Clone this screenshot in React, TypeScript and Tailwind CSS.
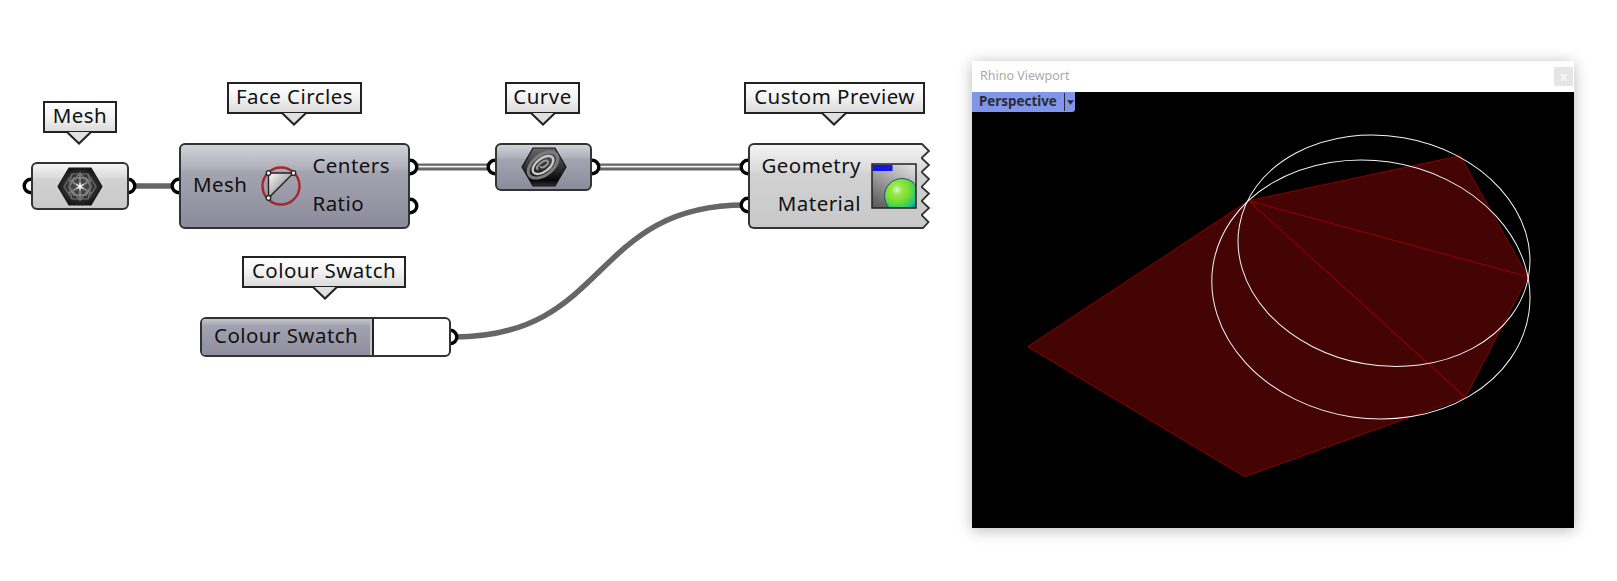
const labelFont = "font-['Noto_Sans',sans-serif] text-[20.5px] leading-[26px] tracking-[0.45px] text-[#111]";
const lightBody = 'bg-[linear-gradient(180deg,#f4f4f4_0%,#d9d9d9_32%,#d2d2d2_34%,#c8c8c8_100%)]';
const darkBody = 'bg-[linear-gradient(180deg,#d2d2d8_0%,#aeaeba_30%,#a4a4b1_32%,#8b8b9c_100%)]';

// --- Canvas pieces ---

function Balloon({ text, className, tipClass }: { text: string; className: string; tipClass: string }) {
  return (
    <div className={`absolute ${className}`}>
      <div className={`h-full flex items-center justify-center pb-[4px] border-2 border-[#222] bg-[linear-gradient(180deg,#ffffff_0%,#f4f4f4_45%,#dcdcdc_100%)] ${labelFont}`}>
        {text}
      </div>
      <svg className={`absolute top-[30px] ${tipClass}`} width="26" height="14" viewBox="0 0 26 14">
        <path d="M1 1 L13 12.500 L25 1" fill="#e0e0e0" stroke="#222" strokeWidth="2" />
      </svg>
    </div>
  );
}

function MeshIcon() {
  return (
    <svg width="46" height="39" viewBox="0 0 46 39">
      <defs>
        <radialGradient id="meshGlow" cx="0.5" cy="0.5" r="0.55">
          <stop offset="0" stopColor="#5a5a5a" />
          <stop offset="0.7" stopColor="#282828" />
          <stop offset="1" stopColor="#0e0e0e" />
        </radialGradient>
      </defs>
      <path d="M12 1 H34 L45 19.500 L34 38 H12 L1 19.500 Z" fill="url(#meshGlow)" stroke="#1c1c1c" strokeWidth="1.200" strokeLinejoin="round" />
      <g stroke="#8e8e8e" strokeWidth="1.500" fill="none">
        <path d="M23 6 V33 M11 12.500 L35 26.500 M35 12.500 L11 26.500" />
        <path d="M15 7 H31 L39 19.500 L31 32 H15 L7 19.500 Z" stroke="#5f5f5f" />
        <path d="M17 11 H29 L34 19.500 L29 28 H17 L12 19.500 Z" />
        <path d="M23 6 L34 19.500 L23 33 L12 19.500 Z" stroke="#747474" />
        <path d="M15 7 L12 19.500 L15 32 M31 7 L34 19.500 L31 32" stroke="#666" />
      </g>
      <path d="M23 16 V23 M19.500 17.500 L26.500 21.500 M26.500 17.500 L19.500 21.500" stroke="#f4f4f4" strokeWidth="1.400" />
      <circle cx="23" cy="19.500" r="1.500" fill="#fff" />
    </svg>
  );
}

function CurveIcon() {
  return (
    <svg width="46" height="40" viewBox="0 0 46 40">
      <defs>
        <linearGradient id="curveHex" x1="0" y1="0" x2="0" y2="1">
          <stop offset="0" stopColor="#6a6a6a" />
          <stop offset="0.55" stopColor="#2c2c2c" />
          <stop offset="0.85" stopColor="#050505" />
          <stop offset="1" stopColor="#333" />
        </linearGradient>
      </defs>
      <path d="M12 1 H34 L45 20 L34 39 H12 L1 20 Z" fill="url(#curveHex)" stroke="#141414" strokeWidth="1.200" strokeLinejoin="round" />
      <g fill="none" strokeLinecap="round" transform="rotate(-38 22 18)">
        <ellipse cx="22" cy="18" rx="17" ry="10" stroke="#7c7c7c" strokeWidth="3" />
        <ellipse cx="22" cy="18" rx="12" ry="6.500" stroke="#c8c8c8" strokeWidth="2.400" />
        <path d="M15 18 C15 14 28 14 28 18 C28 21 19 21 19 18" stroke="#9a9a9a" strokeWidth="2" />
      </g>
    </svg>
  );
}

function FaceCirclesIcon() {
  return (
    <svg width="44" height="44" viewBox="0 0 44 44">
      <defs>
        <linearGradient id="faceTri" x1="0" y1="0" x2="1" y2="1">
          <stop offset="0" stopColor="#fff" />
          <stop offset="0.7" stopColor="#8f8f8f" />
          <stop offset="1" stopColor="#6e6e6e" />
        </linearGradient>
      </defs>
      <path d="M9.500 9 L34.500 9 L9.500 34 Z" fill="url(#faceTri)" stroke="#222" strokeWidth="1.400" />
      <circle cx="22" cy="22" r="18.500" fill="none" stroke="#a5282c" strokeWidth="2.400" />
      <circle cx="9.500" cy="9" r="2.300" fill="#eee" stroke="#222" strokeWidth="1.200" />
      <circle cx="34.500" cy="9" r="2.300" fill="#eee" stroke="#222" strokeWidth="1.200" />
      <circle cx="9.500" cy="34" r="2.300" fill="#eee" stroke="#222" strokeWidth="1.200" />
    </svg>
  );
}

function PreviewIcon() {
  return (
    <svg width="46" height="46" viewBox="0 0 46 46">
      <defs>
        <linearGradient id="previewBack" x1="0.2" y1="1" x2="0.8" y2="0">
          <stop offset="0" stopColor="#5e5e5e" />
          <stop offset="1" stopColor="#dcdcdc" />
        </linearGradient>
        <radialGradient id="previewBall" cx="0.36" cy="0.32" r="0.72">
          <stop offset="0" stopColor="#e4f8d8" />
          <stop offset="0.18" stopColor="#9bea55" />
          <stop offset="0.5" stopColor="#74dc2c" />
          <stop offset="0.82" stopColor="#1dc488" />
          <stop offset="1" stopColor="#0a84a8" />
        </radialGradient>
        <clipPath id="previewClip">
          <rect x="1" y="1" width="44" height="44" />
        </clipPath>
      </defs>
      <rect x="1" y="1" width="44" height="44" fill="url(#previewBack)" />
      <rect x="1.500" y="2" width="20" height="6" fill="#1414e6" />
      <g clipPath="url(#previewClip)">
        <circle cx="31" cy="33" r="17.500" fill="url(#previewBall)" stroke="#1c4f78" strokeWidth="1" />
      </g>
      <rect x="1" y="1" width="44" height="44" fill="none" stroke="#222" strokeWidth="1.500" />
    </svg>
  );
}

function Wires() {
  return (
    <svg className="absolute left-0 top-0" width="972" height="581" viewBox="0 0 972 581">
      <path d="M132 186 H176" stroke="#666" strokeWidth="5.500" fill="none" />
      <path d="M414 167 H500 M588 167 H744" stroke="#666" strokeWidth="7" fill="none" />
      <path d="M414 166.600 H500 M588 166.600 H744" stroke="#f2f2f2" strokeWidth="1.600" fill="none" />
      <path d="M454 337 C610 337 590 205 745 205" stroke="#666" strokeWidth="5.500" fill="none" />
      <g fill="#fff" stroke="#000" strokeWidth="3.400">
        <circle cx="31" cy="186" r="6.800" />
        <circle cx="128" cy="186" r="6.800" />
        <circle cx="179" cy="186" r="6.800" />
        <circle cx="410" cy="167" r="6.800" />
        <circle cx="410" cy="206" r="6.800" />
        <circle cx="495" cy="167" r="6.800" />
        <circle cx="592" cy="167" r="6.800" />
        <circle cx="748" cy="167" r="6.800" />
        <circle cx="748" cy="205" r="6.800" />
        <circle cx="450" cy="337" r="6.800" />
      </g>
    </svg>
  );
}

function CustomPreviewNode() {
  return (
    <div className="absolute left-[748px] top-[143px] w-[183px] h-[86px] flex">
      <div className={`w-[174px] h-full flex items-center gap-[10px] pr-[5px] justify-end rounded-l-[6px] border-y-2 border-l-2 border-[#333] ${lightBody}`}>
        <div className={`flex flex-col items-end gap-[12px] pb-[4px] ${labelFont}`}>
          <span>Geometry</span>
          <span>Material</span>
        </div>
        <PreviewIcon />
      </div>
      <svg className="-ml-px" width="10" height="86" viewBox="921 143 10 86">
        <defs>
          <linearGradient id="zigFill" gradientUnits="userSpaceOnUse" x1="0" y1="143" x2="0" y2="229">
            <stop offset="0" stopColor="#f4f4f4" />
            <stop offset="0.32" stopColor="#d9d9d9" />
            <stop offset="0.34" stopColor="#d2d2d2" />
            <stop offset="1" stopColor="#c8c8c8" />
          </linearGradient>
        </defs>
        <path
          d="M920 144 H922 L929 151 L921.500 158 L929 165 L921.500 172 L929 179 L921.500 187 L929 193.500 L921.500 201 L929 208 L921.500 215 L928.500 222 L923 228 H920 Z"
          fill="url(#zigFill)"
        />
        <path
          d="M920 144 H922 L929 151 L921.500 158 L929 165 L921.500 172 L929 179 L921.500 187 L929 193.500 L921.500 201 L929 208 L921.500 215 L928.500 222 L923 228 H920"
          fill="none"
          stroke="#333"
          strokeWidth="1.800"
        />
      </svg>
    </div>
  );
}

function Canvas() {
  return (
    <div className="relative w-[972px] h-full shrink-0">
      <Wires />

      <Balloon text="Mesh" className="left-[43px] top-[101px] w-[74px] h-[32px]" tipClass="left-[23px]" />
      <Balloon text="Face Circles" className="left-[227px] top-[82px] w-[135px] h-[32px]" tipClass="left-[54px]" />
      <Balloon text="Curve" className="left-[505px] top-[82px] w-[75px] h-[32px]" tipClass="left-[25px]" />
      <Balloon text="Custom Preview" className="left-[744px] top-[82px] w-[181px] h-[32px]" tipClass="left-[77px]" />
      <Balloon text="Colour Swatch" className="left-[242px] top-[256px] w-[164px] h-[32px]" tipClass="left-[70px]" />

      <div className={`absolute left-[31px] top-[162px] w-[98px] h-[48px] flex items-center justify-center rounded-[6px] border-2 border-[#333] ${lightBody}`}>
        <MeshIcon />
      </div>

      <div className={`absolute left-[179px] top-[143px] w-[231px] h-[86px] flex items-center rounded-[6px] border-2 border-[#333] pl-[12px] ${darkBody}`}>
        <span className={`pb-[4px] ${labelFont}`}>Mesh</span>
        <div className="ml-[12px] w-[44px]">
          <FaceCirclesIcon />
        </div>
        <div className={`ml-[9px] flex flex-col gap-[12px] pb-[4px] ${labelFont}`}>
          <span>Centers</span>
          <span>Ratio</span>
        </div>
      </div>

      <div className={`absolute left-[495px] top-[143px] w-[97px] h-[48px] flex items-center justify-center rounded-[6px] border-2 border-[#333] ${darkBody}`}>
        <CurveIcon />
      </div>

      <CustomPreviewNode />

      <div className="absolute left-[200px] top-[317px] w-[251px] h-[40px] flex rounded-[6px] border-2 border-[#333] bg-white overflow-hidden">
        <div className={`w-[172px] h-full flex items-center pl-[12px] pb-[4px] border-r-2 border-[#222] shadow-[inset_-2px_0_0_#c4c4cc] bg-[linear-gradient(180deg,#c4c4cc_0%,#a2a2b0_20%,#8e8e9f_100%)] ${labelFont}`}>
          Colour Swatch
        </div>
      </div>
    </div>
  );
}

// --- Viewport window ---

function ViewportScene() {
  return (
    <svg className="block" width="602" height="436" viewBox="0 0 602 436">
      <path d="M55.500 254.700 L276.500 108.700 L488.200 63.700 L555.800 184.700 L493.300 305.300 L272.500 384.700 Z" fill="#440404" stroke="#8a0000" strokeWidth="1" />
      <path d="M276.500 108.700 L555.800 184.700 M276.500 108.700 L493.300 305.300" stroke="#8a0000" strokeWidth="1.200" fill="none" />
      <ellipse cx="412" cy="158.800" rx="146.800" ry="114.700" transform="rotate(9.800 412 158.800)" fill="none" stroke="#f4f4f4" strokeWidth="1" />
      <ellipse cx="398.900" cy="197.500" rx="159.700" ry="128.800" transform="rotate(8.400 398.900 197.500)" fill="none" stroke="#f4f4f4" strokeWidth="1" />
    </svg>
  );
}

function RhinoViewport() {
  return (
    <div className="mt-[61px] w-[602px] h-[467px] flex flex-col bg-white shadow-[0_2px_14px_rgba(0,0,0,0.28)]">
      <div className="h-[31px] flex items-center justify-between pl-[8px] pr-px">
        <span className="font-['Noto_Sans',sans-serif] text-[12.5px] text-[#aaaaaa]">Rhino Viewport</span>
        <div className="w-[19px] h-[19px] flex items-center justify-center bg-[#e5e5e5] font-['DejaVu_Sans',sans-serif] text-[12px] font-bold leading-none text-[#f6f6f6]">
          x
        </div>
      </div>
      <div className="relative flex-1 bg-black">
        <ViewportScene />
        <div className="absolute left-0 top-0 w-[103px] h-[20px] flex items-center rounded-br-[3px] bg-[#8096ea] pl-[7px]">
          <span className="w-[85px] font-['Noto_Sans',sans-serif] text-[13.4px] font-bold leading-none text-[#2a2a35]">Perspective</span>
          <div className="h-[18px] w-[10px] flex items-center border-l border-[#2a2a35]">
            <svg className="ml-[2px]" width="8" height="5" viewBox="0 0 8 5">
              <path d="M0 0 H8 L4 5 Z" fill="#2a2a35" />
            </svg>
          </div>
        </div>
      </div>
    </div>
  );
}

export default function App() {
  return (
    <div className="flex w-[1617px] h-[581px] overflow-hidden bg-white">
      <Canvas />
      <RhinoViewport />
    </div>
  );
}
